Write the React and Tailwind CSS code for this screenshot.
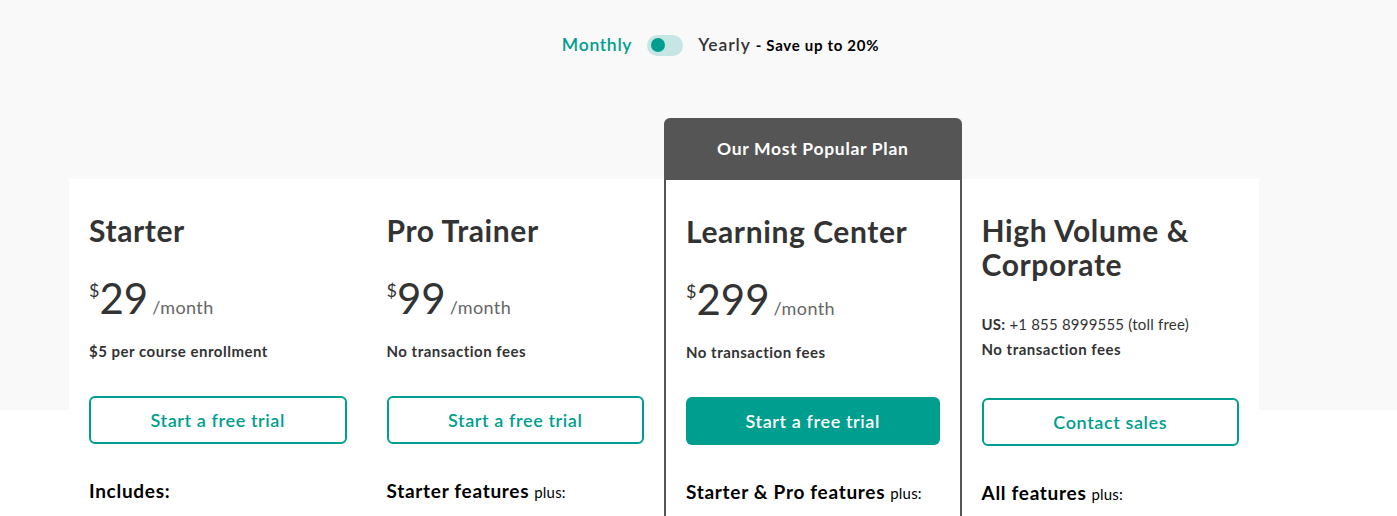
import { useState } from "react";

const TEAL = "text-[#009e8e]";

const plans = [
  {
    name: ["Starter"],
    price: "29",
    note: "$5 per course enrollment",
    cta: "Start a free trial",
    features: { bold: "Includes:", rest: "" },
  },
  {
    name: ["Pro Trainer"],
    price: "99",
    note: "No transaction fees",
    cta: "Start a free trial",
    features: { bold: "Starter features", rest: "plus:" },
  },
  {
    name: ["Learning Center"],
    price: "299",
    note: "No transaction fees",
    cta: "Start a free trial",
    popular: true,
    features: { bold: "Starter & Pro features", rest: "plus:" },
  },
  {
    name: ["High Volume &", "Corporate"],
    phone: "+1 855 8999555 (toll free)",
    note: "No transaction fees",
    cta: "Contact sales",
    features: { bold: "All features", rest: "plus:" },
  },
];

function Toggle() {
  const [yearly, setYearly] = useState(false);
  return (
    <div className="flex items-center justify-center pt-[32px] pl-[44px]">
      <span className={`text-[17.5px] font-semibold tracking-[0.7px] ${yearly ? "text-[#333]" : TEAL}`}>Monthly</span>
      <button
        onClick={() => setYearly(!yearly)}
        className={`mx-[15px] flex h-[21px] w-[36px] items-center rounded-full bg-[#c6e6e3] px-[4px] ${yearly ? "justify-end" : "justify-start"}`}
      >
        <span className="size-[14px] rounded-full bg-[#009e8e]" />
      </button>
      <span className={`text-[17.5px] font-semibold tracking-[0.9px] ${yearly ? TEAL : "text-[#333]"}`}>Yearly</span>
      <span className="ml-[5px] text-[15px] font-bold tracking-[0.7px] text-black">- Save up to 20%</span>
    </div>
  );
}

function PlanBody({ plan }) {
  return (
    <div className="px-5 pt-[34px]">
      <h2 className="text-[30px] font-bold leading-[34px] tracking-[0.6px] text-[#333]">
        {plan.name.map((l) => (
          <div key={l}>{l}</div>
        ))}
      </h2>

      {plan.price ? (
        <>
          <div className="mt-[30px] flex items-baseline text-[#333]">
            <span className="relative -top-[17px] text-[18px] leading-none">$</span>
            <span className="text-[42px] leading-none">{plan.price}</span>
            <span className="ml-[4px] text-[18px] leading-none tracking-[0.4px] text-[#666]">/month</span>
          </div>
          <p className="mt-[22px] text-[15px] font-bold leading-[20px] tracking-[0.5px] text-[#333]">{plan.note}</p>
        </>
      ) : (
        <>
          <p className="mt-[33px] text-[15px] leading-[20px] tracking-[0.2px] text-[#333]">
            <span className="font-bold">US:</span> {plan.phone}
          </p>
          <p className="mt-[5px] text-[15px] font-bold leading-[20px] tracking-[0.5px] text-[#333]">{plan.note}</p>
        </>
      )}

      <button
        className={`${plan.price ? "mt-[35px]" : "mt-[39px]"} flex h-[48px] w-full items-center justify-center rounded-[6px] text-[18px] font-semibold tracking-[0.6px] ${
          plan.popular
            ? "bg-[#009e8e] text-white"
            : "border-2 border-[#009e8e] bg-white text-[#009e8e]"
        }`}
      >
        {plan.cta}
      </button>

      <p className="mt-[35px] pb-6 text-[19px] leading-[24px] tracking-[0.7px] text-black">
        <span className="font-bold">{plan.features.bold}</span>
        {plan.features.rest && (
          <span className="ml-[5px] text-[15px] tracking-[0.2px]">{plan.features.rest}</span>
        )}
      </p>
    </div>
  );
}

export default function App() {
  return (
    <div
      className="min-h-[516px] bg-[linear-gradient(#f9f9f9_410px,#ffffff_410px)] text-[#333]"
      style={{ fontFamily: "Lato, 'Noto Sans', sans-serif" }}
    >
      <Toggle />
      <div className="ml-[69px] mt-[121px] grid w-[1190px] grid-cols-4 items-start">
        {plans.map((plan) =>
          plan.popular ? (
            <div key={plan.cta + plan.price} className="-mt-[61px] flex flex-col">
              <div className="flex h-[62px] items-center justify-center rounded-t-[6px] bg-[#555] text-[17.5px] font-bold tracking-[0.7px] text-white">
                Our Most Popular Plan
              </div>
              <div className="border-x-2 border-[#555] bg-white">
                <PlanBody plan={plan} />
              </div>
            </div>
          ) : (
            <div key={plan.cta + (plan.price || "x")} className="bg-white">
              <PlanBody plan={plan} />
            </div>
          )
        )}
      </div>
    </div>
  );
}
